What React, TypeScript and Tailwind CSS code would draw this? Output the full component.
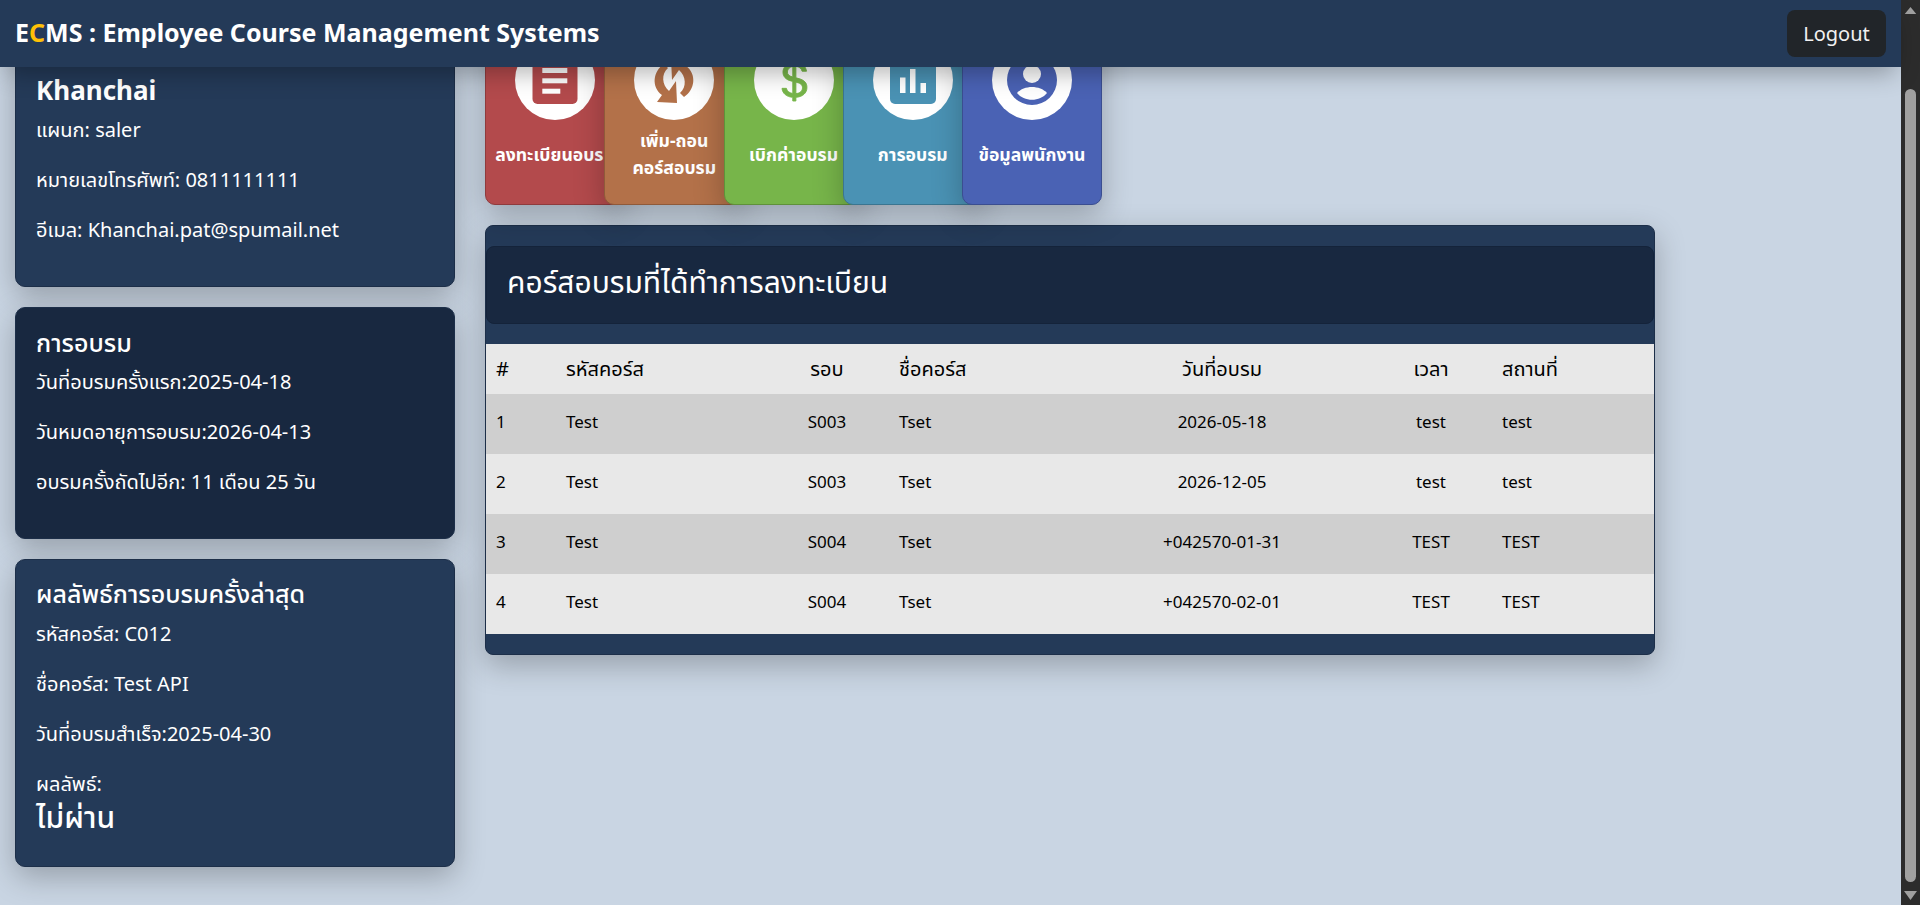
import { BsCurrencyDollar } from "react-icons/bs";

const font = "font-['Noto_Sans','Noto_Sans_Thai','Noto_Sans_CJK_SC',sans-serif]";

function DocIcon() {
  return (
    <svg viewBox="0 0 80 80" className="h-20 w-20">
      <rect x="17.5" y="-10" width="45" height="74" rx="5" fill="#b34a4c" />
      <rect x="27.3" y="18" width="25" height="5" fill="#fff" />
      <rect x="27.3" y="28" width="25" height="5" fill="#fff" />
      <rect x="27.3" y="38.3" width="25" height="5" fill="#fff" />
      <rect x="27.3" y="48.7" width="18" height="5" fill="#fff" />
    </svg>
  );
}

function SyncIcon() {
  const arrow = "M30 24 C19 31 17 47 28 55 L23 62 L43 63 L42 41 L35 51 C28 45 27 34 34 28 Z";
  return (
    <svg viewBox="0 0 80 80" className="h-20 w-20">
      <path d={arrow} fill="#b37149" />
      <path d={arrow} fill="#b37149" transform="rotate(180 40 40.5)" />
    </svg>
  );
}

function ChartIcon() {
  return (
    <svg viewBox="0 0 80 80" className="h-20 w-20">
      <rect x="17" y="-10" width="46" height="74" rx="5" fill="#4a92b4" />
      <rect x="27" y="37.5" width="5.5" height="15.5" fill="#fff" />
      <rect x="37" y="29" width="5.5" height="24" fill="#fff" />
      <rect x="47.5" y="43" width="5.5" height="10" fill="#fff" />
    </svg>
  );
}

function PersonIcon() {
  return (
    <svg viewBox="0 0 80 80" className="h-20 w-20">
      <circle cx="40" cy="40" r="25" fill="#4a62b4" />
      <circle cx="40" cy="34" r="9" fill="#fff" />
      <path d="M25 53 C32 45 48 45 55 53 C48 62 32 62 25 53 Z" fill="#fff" />
    </svg>
  );
}

function NavButton({ color, border, label, icon, first }: { color: string; border: string; label: React.ReactNode; icon: React.ReactNode; first?: boolean }) {
  return (
    <div className={`relative flex h-[181px] w-[140px] shrink-0 flex-col items-center rounded-[10px] border pt-[15px] shadow-[0_10px_30px_rgba(0,0,0,0.25)] ${color} ${border} ${first ? "" : "-ml-[20.75px]"}`}>
      <div className="flex h-20 w-20 shrink-0 items-center justify-center rounded-full bg-white">{icon}</div>
      <div className="flex h-[69px] items-center justify-center whitespace-nowrap text-center text-[17.6px] font-bold leading-[27px] text-white">{label}</div>
    </div>
  );
}

function Card({ children, dark, className }: { children: React.ReactNode; dark?: boolean; className?: string }) {
  return (
    <section className={`rounded-[10px] border border-[#1d2f49] px-[20px] pt-[19px] text-white shadow-[0_10px_30px_rgba(0,0,0,0.25)] ${dark ? "bg-[#182840]" : "bg-[#243a58]"} ${className ?? ""}`}>
      {children}
    </section>
  );
}

function Line({ children }: { children: React.ReactNode }) {
  return <p className="mb-[23px] text-[20px] leading-[27px]">{children}</p>;
}

const rows = [
  ["1", "Test", "S003", "Tset", "2026-05-18", "test", "test"],
  ["2", "Test", "S003", "Tset", "2026-12-05", "test", "test"],
  ["3", "Test", "S004", "Tset", "+042570-01-31", "TEST", "TEST"],
  ["4", "Test", "S004", "Tset", "+042570-02-01", "TEST", "TEST"],
];

export default function App() {
  return (
    <div className={`relative flex h-[905px] w-full overflow-hidden bg-[#c9d5e3] ${font}`}>
      <header className="absolute left-0 top-0 z-10 flex h-[67px] w-[1901px] items-center justify-between bg-[#243a58] pl-[15px] pr-[15px] shadow-[0_12px_24px_-6px_rgba(0,0,0,0.3)]">
        <h1 className="-mt-[2px] text-[25px] font-bold text-white">
          E<span className="text-[#ffc107]">C</span>MS : Employee Course Management Systems
        </h1>
        <button className="h-[47px] w-[99px] rounded-[8px] bg-[#212529] text-[20px] text-[#f1f1f1]">Logout</button>
      </header>

      <main className="flex min-w-0 flex-1 items-start">
        <aside className="ml-[15px] flex w-[440px] shrink-0 flex-col gap-[20px] pt-[54px]">
          <Card className="h-[233px]">
            <h2 className="mb-[10px] text-[26px] font-bold leading-[32px]">Khanchai</h2>
            <Line>แผนก: saler</Line>
            <Line>หมายเลขโทรศัพท์: 0811111111</Line>
            <Line>อีเมล: Khanchai.pat@spumail.net</Line>
          </Card>
          <Card dark className="h-[232px]">
            <h2 className="-mt-[1px] mb-[10px] text-[25px] font-medium leading-[32px]">การอบรม</h2>
            <Line>วันที่อบรมครั้งแรก:2025-04-18</Line>
            <Line>วันหมดอายุการอบรม:2026-04-13</Line>
            <Line>อบรมครั้งถัดไปอีก: 11 เดือน 25 วัน</Line>
          </Card>
          <Card className="h-[308px]">
            <h2 className="-mt-[2px] mb-[11px] text-[25px] font-medium leading-[32px]">ผลลัพธ์การอบรมครั้งล่าสุด</h2>
            <Line>รหัสคอร์ส: C012</Line>
            <Line>ชื่อคอร์ส: Test API</Line>
            <Line>วันที่อบรมสำเร็จ:2025-04-30</Line>
            <p className="text-[20px] leading-[27px]">ผลลัพธ์:</p>
            <p className="text-[30px] font-medium leading-[39px]">ไม่ผ่าน</p>
          </Card>
        </aside>

        <div className="ml-[30px] flex w-[1170px] shrink-0 flex-col pt-[24px]">
          <div className="flex">
            <NavButton first color="bg-[#b34a4c]" border="border-[#8f3b3d]" icon={<DocIcon />} label="ลงทะเบียนอบรม" />
            <NavButton color="bg-[#b37149]" border="border-[#8f5a3a]" icon={<SyncIcon />} label={<span className="-mt-[2px] block">เพิ่ม-ถอน<br />คอร์สอบรม</span>} />
            <NavButton color="bg-[#77b54a]" border="border-[#5f913b]" icon={<BsCurrencyDollar size={48} color="#77b54a" stroke="#77b54a" strokeWidth={0.3} />} label="เบิกค่าอบรม" />
            <NavButton color="bg-[#4a92b4]" border="border-[#3b7590]" icon={<ChartIcon />} label="การอบรม" />
            <NavButton color="bg-[#4a62b4]" border="border-[#3b4e90]" icon={<PersonIcon />} label="ข้อมูลพนักงาน" />
          </div>

          <section className="mt-[20px] h-[430px] rounded-[8px] border border-[#1d2f49] bg-[#243a58] py-[20px] shadow-[0_10px_30px_rgba(0,0,0,0.25)]">
            <div className="flex h-[78px] items-center rounded-[8px] border border-[#14233a] bg-[#182840] px-[20px] pb-[6px]">
              <h2 className="text-[30px] leading-[38px] text-white">คอร์สอบรมที่ได้ทำการลงทะเบียน</h2>
            </div>
            <table className="mt-[20px] w-full table-fixed border-collapse text-black">
              <colgroup>
                <col className="w-[70px]" />
                <col className="w-[207px]" />
                <col className="w-[126px]" />
                <col className="w-[185px]" />
                <col className="w-[294px]" />
                <col className="w-[124px]" />
                <col />
              </colgroup>
              <thead>
                <tr className="h-[50px] bg-[#e8e8e8] text-[20px]">
                  <th className="px-[10px] text-left font-normal">#</th>
                  <th className="px-[10px] text-left font-normal">รหัสคอร์ส</th>
                  <th className="pl-[11px] pr-[9px] text-center font-normal">รอบ</th>
                  <th className="px-[10px] text-left font-normal">ชื่อคอร์ส</th>
                  <th className="pl-[11px] pr-[9px] text-center font-normal">วันที่อบรม</th>
                  <th className="pl-[11px] pr-[9px] text-center font-normal">เวลา</th>
                  <th className="px-[10px] text-left font-normal">สถานที่</th>
                </tr>
              </thead>
              <tbody>
                {rows.map((r, i) => (
                  <tr key={r[0]} className={`h-[60px] text-[17px] ${i % 2 === 0 ? "bg-[#cfcfcf]" : "bg-[#e8e8e8]"}`}>
                    {r.map((c, j) => (
                      <td key={j} className={`pb-[5px] ${j === 2 || j === 4 || j === 5 ? "pl-[11px] pr-[9px] text-center" : "px-[10px] text-left"}`}>{c}</td>
                    ))}
                  </tr>
                ))}
              </tbody>
            </table>
          </section>
        </div>
      </main>

      <div className="relative flex h-full w-[19px] shrink-0 flex-col items-center bg-[#2c2c2c]">
        <svg viewBox="0 0 13 9" className="mt-[7px] h-[8px] w-[13px] shrink-0"><path d="M6.5 0 L13 8 L0 8 Z" fill="#a0a0a0" /></svg>
        <div className="mt-[74px] h-[793px] w-[11px] rounded-full bg-[#a0a0a0]" />
        <svg viewBox="0 0 13 9" className="mt-[9px] h-[9px] w-[13px] shrink-0"><path d="M0 0 L13 0 L6.5 9 Z" fill="#a0a0a0" /></svg>
      </div>
    </div>
  );
}
